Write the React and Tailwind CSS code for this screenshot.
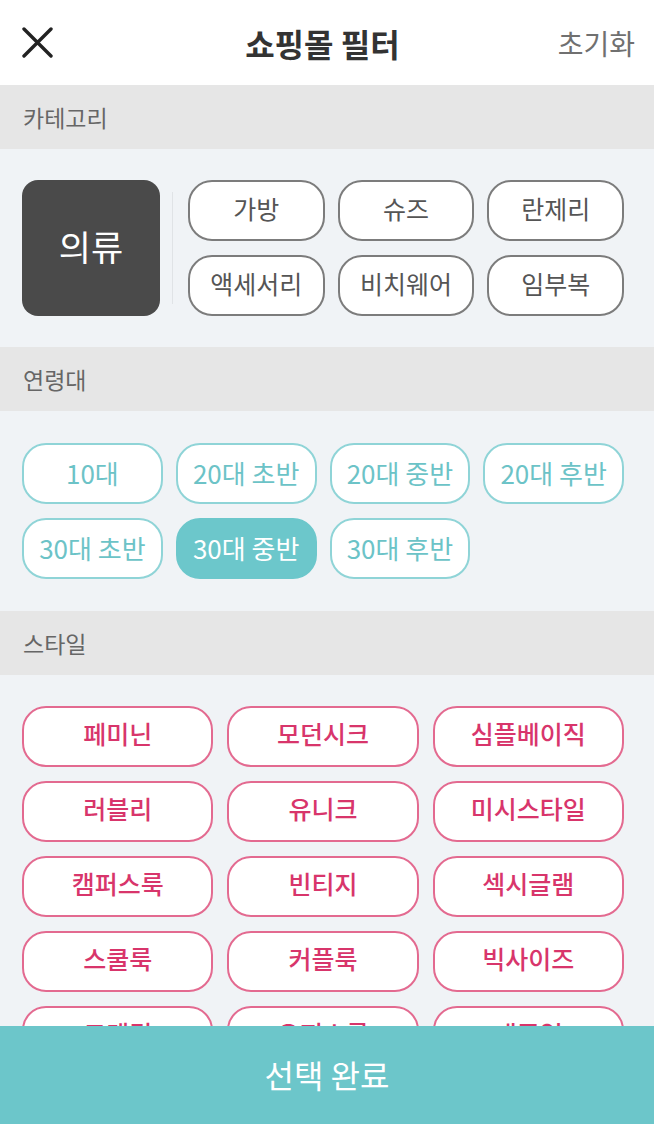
import React, { useState } from "react";

const CATEGORIES = ["가방", "슈즈", "란제리", "액세서리", "비치웨어", "임부복"];
const AGES = ["10대", "20대 초반", "20대 중반", "20대 후반", "30대 초반", "30대 중반", "30대 후반"];
const STYLES = [
  "페미닌", "모던시크", "심플베이직",
  "러블리", "유니크", "미시스타일",
  "캠퍼스룩", "빈티지", "섹시글램",
  "스쿨룩", "커플룩", "빅사이즈",
  "로맨틱", "오피스룩", "캐주얼",
];

function SectionTitle({ children }) {
  return (
    <div className="h-[64px] bg-[#e6e6e6] flex items-center px-[23px] text-[23px] text-[#666666]">
      {children}
    </div>
  );
}

export default function App() {
  const [age, setAge] = useState("30대 중반");

  return (
    <div className="h-[1124px] w-full flex flex-col overflow-hidden bg-[#f0f3f6] font-['Noto_Sans_CJK_KR','Noto_Sans',sans-serif]">
      <div className="flex-1 overflow-hidden">
        {/* header */}
        <div className="h-[85px] bg-white flex items-center justify-between pl-[22px] pr-[19px]">
          <svg width="31" height="31" viewBox="0 0 31 31" className="text-[#222222]">
            <path d="M2 2 L29 29 M29 2 L2 29" stroke="currentColor" strokeWidth="3.4" strokeLinecap="round" />
          </svg>
          <h1 className="text-[32px] font-bold text-[#333333] ml-[34px]">쇼핑몰 필터</h1>
          <button className="text-[28px] text-[#707070]">초기화</button>
        </div>

        <SectionTitle>카테고리</SectionTitle>
        <div className="flex pl-[22px] pr-[30px] py-[31px]">
          <div className="w-[138px] h-[136px] shrink-0 rounded-[16px] bg-[#4a4a4a] flex items-center justify-center pb-[3px] text-white text-[35px]">
            의류
          </div>
          <div className="w-px bg-[#e0e3e6] ml-[12px] my-[12px]" />
          <div className="flex-1 ml-[15px] grid grid-cols-3 gap-x-[13px] gap-y-[14px]">
            {CATEGORIES.map((c) => (
              <button
                key={c}
                className="h-[61px] rounded-[24px] border-2 border-[#7c7c7c] bg-white pb-[3px] text-[25px] text-[#555555]"
              >
                {c}
              </button>
            ))}
          </div>
        </div>

        <SectionTitle>연령대</SectionTitle>
        <div className="grid grid-cols-4 gap-x-[13px] gap-y-[14px] pl-[22px] pr-[30px] py-[32px]">
          {AGES.map((a) => {
            const on = a === age;
            return (
              <button
                key={a}
                onClick={() => setAge(a)}
                className={
                  on
                    ? "h-[61px] rounded-[24px] border-2 border-[#6cc7cb] bg-[#6cc7cb] pb-[3px] text-[26px] text-white"
                    : "h-[61px] rounded-[24px] border-2 border-[#8fd4d7] bg-white pb-[3px] text-[26px] text-[#6cc3c7]"
                }
              >
                {a}
              </button>
            );
          })}
        </div>

        <SectionTitle>스타일</SectionTitle>
        <div className="grid grid-cols-3 gap-x-[14px] gap-y-[14px] pl-[22px] pr-[30px] pt-[31px] pb-[32px]">
          {STYLES.map((s) => (
            <button
              key={s}
              className="h-[61px] rounded-[24px] border-2 border-[#e36a90] bg-white pb-[5px] text-[25px] font-medium text-[#d8356b]"
            >
              {s}
            </button>
          ))}
        </div>
      </div>

      <button className="h-[98px] shrink-0 bg-[#6cc6ca] pb-[2px] text-white text-[32px]">선택 완료</button>
    </div>
  );
}
